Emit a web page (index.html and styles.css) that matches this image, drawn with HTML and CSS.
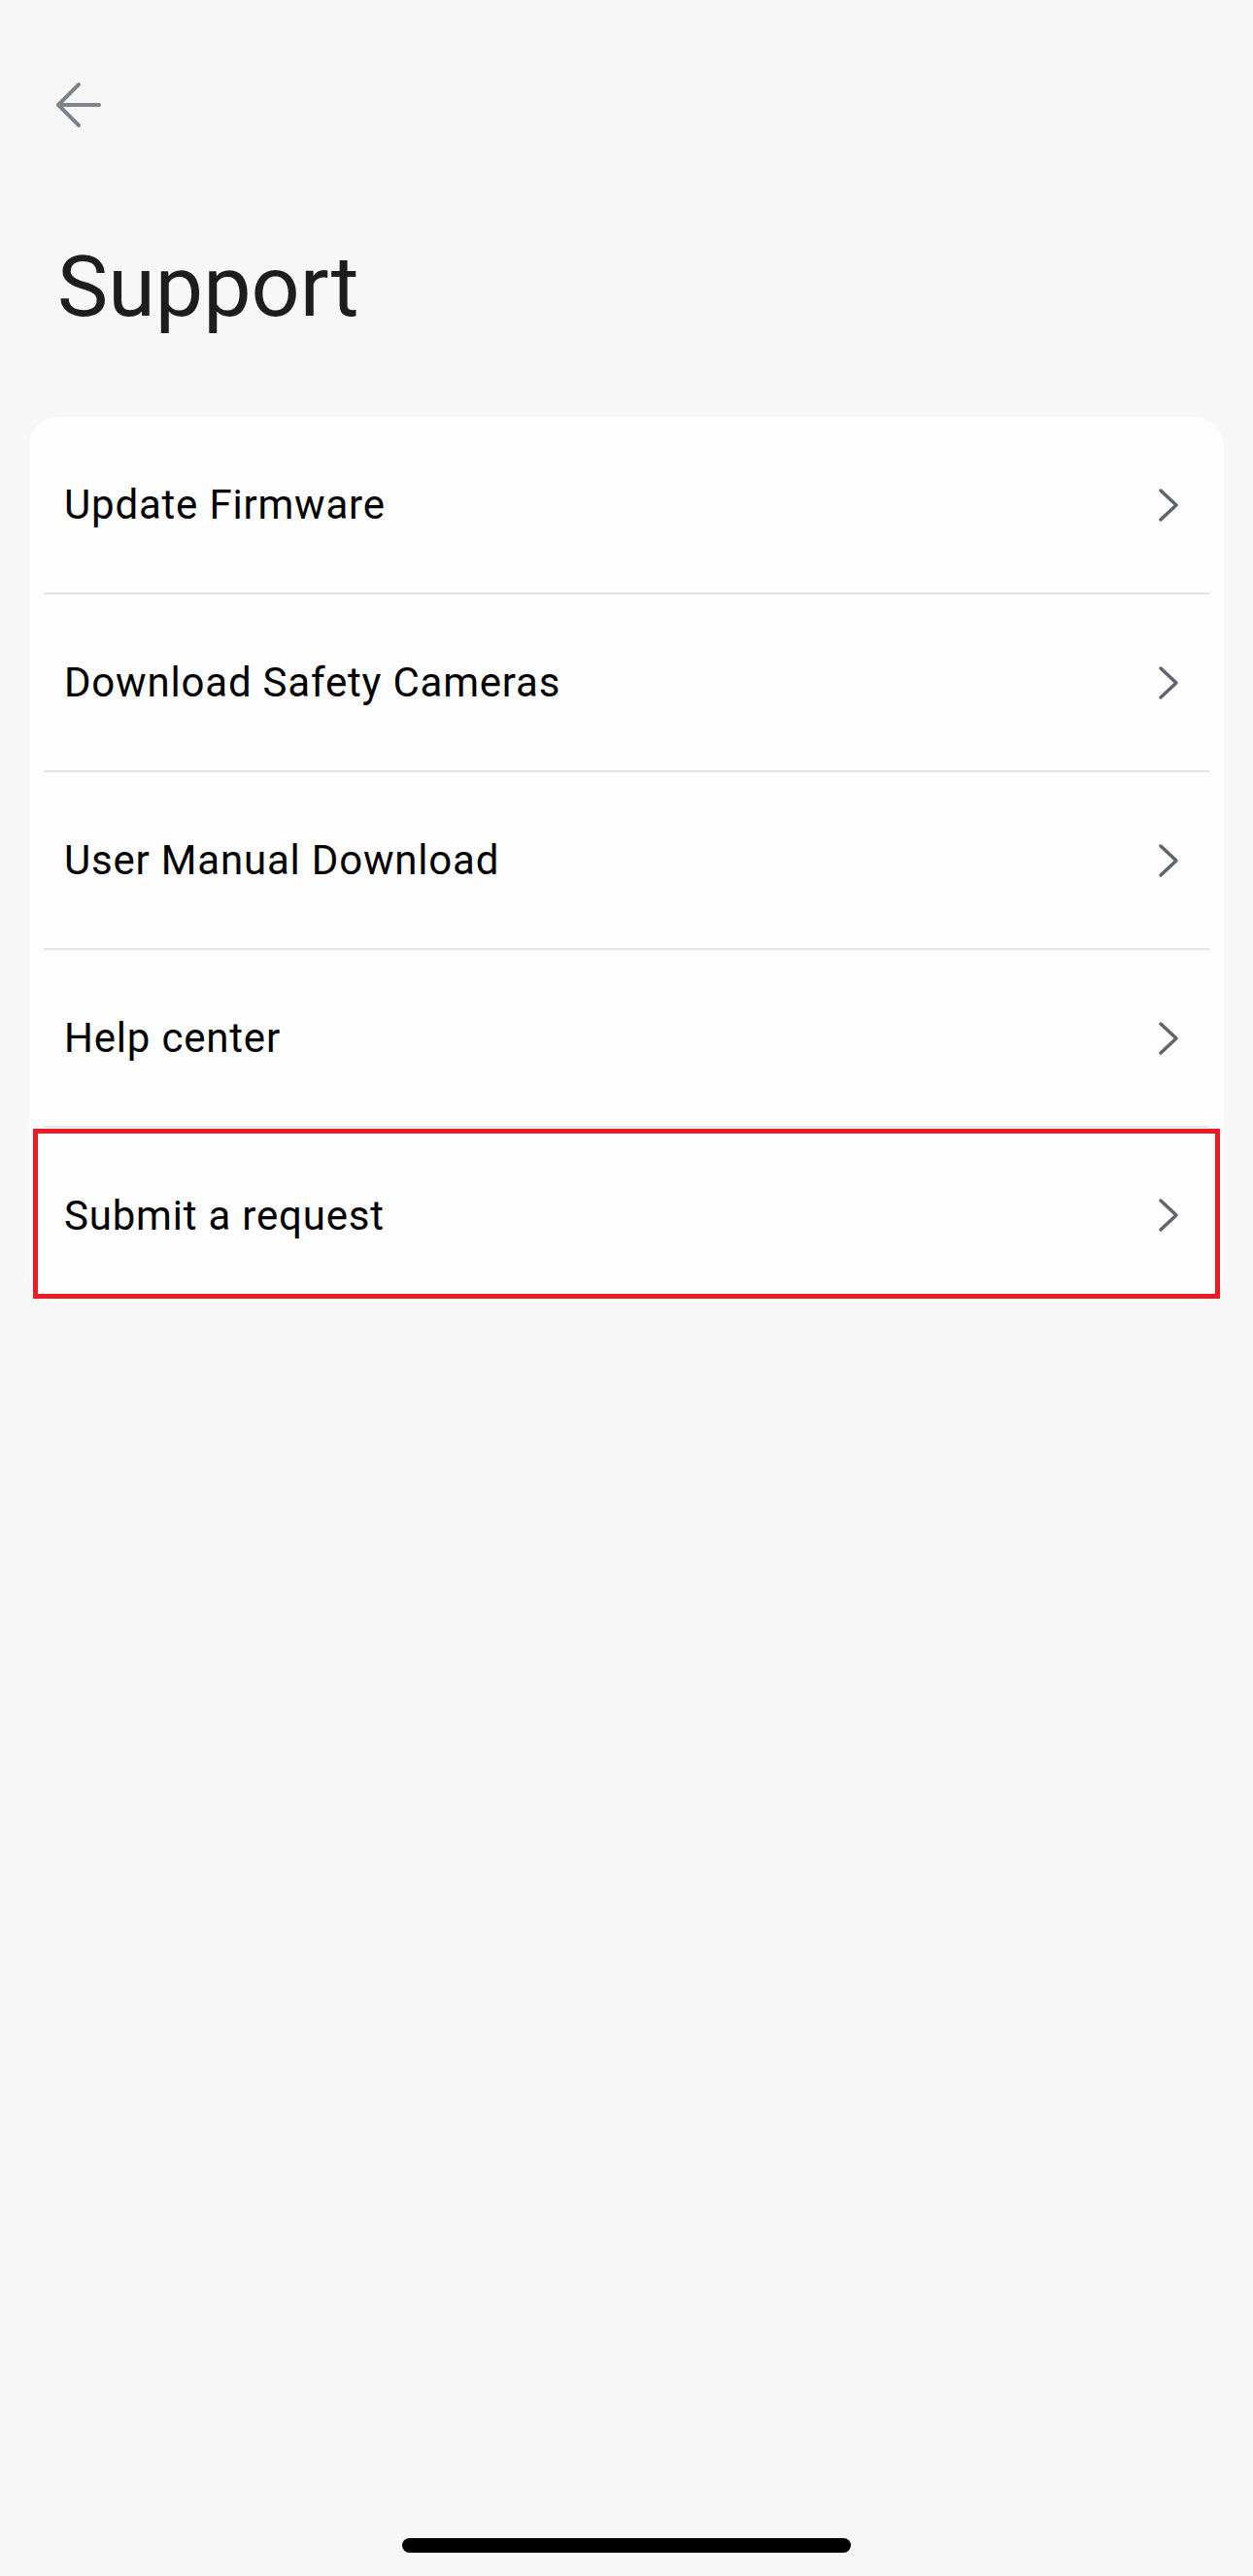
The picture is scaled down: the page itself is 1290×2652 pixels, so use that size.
FILE: index.html
```html
<!DOCTYPE html>
<html lang="en">
<head>
    <meta charset="UTF-8">
    <meta name="viewport" content="width=device-width, initial-scale=1.0">
    <title>Support</title>
    <link rel="stylesheet" href="styles.css">
</head>
<body>
    <div class="screen">
        <header class="top-bar">
            <button class="back-button" aria-label="Back">
                <svg width="48" height="48" viewBox="0 0 48 48" fill="none" stroke="#7e838c" stroke-width="4" stroke-linecap="round" stroke-linejoin="round">
                    <path d="M3 24 H45"/>
                    <path d="M24 3 L3 24 L24 45"/>
                </svg>
            </button>
        </header>

        <h1 class="page-title">Support</h1>

        <div class="card">
            <div class="row">
                <span class="row-label">Update Firmware</span>
                <svg class="chevron" width="22" height="36" viewBox="0 0 22 36" fill="none" stroke="#5f6470" stroke-width="3.5" stroke-linecap="round" stroke-linejoin="round"><path d="M3 3 L19 18 L3 33"/></svg>
            </div>
            <div class="divider"></div>
            <div class="row">
                <span class="row-label">Download Safety Cameras</span>
                <svg class="chevron" width="22" height="36" viewBox="0 0 22 36" fill="none" stroke="#5f6470" stroke-width="3.5" stroke-linecap="round" stroke-linejoin="round"><path d="M3 3 L19 18 L3 33"/></svg>
            </div>
            <div class="divider"></div>
            <div class="row">
                <span class="row-label">User Manual Download</span>
                <svg class="chevron" width="22" height="36" viewBox="0 0 22 36" fill="none" stroke="#5f6470" stroke-width="3.5" stroke-linecap="round" stroke-linejoin="round"><path d="M3 3 L19 18 L3 33"/></svg>
            </div>
            <div class="divider"></div>
            <div class="row">
                <span class="row-label">Help center</span>
                <svg class="chevron" width="22" height="36" viewBox="0 0 22 36" fill="none" stroke="#5f6470" stroke-width="3.5" stroke-linecap="round" stroke-linejoin="round"><path d="M3 3 L19 18 L3 33"/></svg>
            </div>
            <div class="divider"></div>
            <div class="row row-last">
                <span class="row-label">Submit a request</span>
                <svg class="chevron" width="22" height="36" viewBox="0 0 22 36" fill="none" stroke="#5f6470" stroke-width="3.5" stroke-linecap="round" stroke-linejoin="round"><path d="M3 3 L19 18 L3 33"/></svg>
                <span class="highlight"></span>
            </div>
        </div>

        <div class="home-indicator"></div>
    </div>
</body>
</html>
```

FILE: styles.css
```css
body {
    margin: 0;
    font-family: Roboto, "Liberation Sans", Arial, sans-serif;
    background-color: #f7f7f7;
    color: #000;
}

.screen {
    height: 2652px;
    display: flex;
    flex-direction: column;
}

.top-bar {
    padding: 84px 0 0 57px;
    height: 48px;
}

.back-button {
    background: none;
    border: none;
    padding: 0;
    width: 48px;
    height: 48px;
    cursor: pointer;
}

.back-button svg {
    display: block;
}

.page-title {
    margin: 108px 0 0 59px;
    font-size: 88px;
    font-weight: 400;
    line-height: 110px;
    color: #1c1d1f;
}

.card {
    margin: 79px 30px 0;
    background: #fdfdfd;
    border-radius: 30px;
}

.row {
    height: 181px;
    display: flex;
    align-items: center;
    justify-content: space-between;
    padding: 0 46px 0 36px;
    position: relative;
}

.row-last {
    height: 180px;
}

.row-label {
    font-size: 42px;
    letter-spacing: 0.8px;
}

.chevron {
    display: block;
}

.divider {
    height: 2px;
    margin: 0 15px;
    background: #e4e4e4;
}

/* red annotation frame round the last item */
.highlight {
    position: absolute;
    top: 1px;
    left: 4px;
    right: 4px;
    bottom: 4px;
    border: 5px solid #ec1c24;
    pointer-events: none;
}

.home-indicator {
    margin: auto auto 24px;
    width: 462px;
    height: 15px;
    border-radius: 8px;
    background: #000;
}
```
